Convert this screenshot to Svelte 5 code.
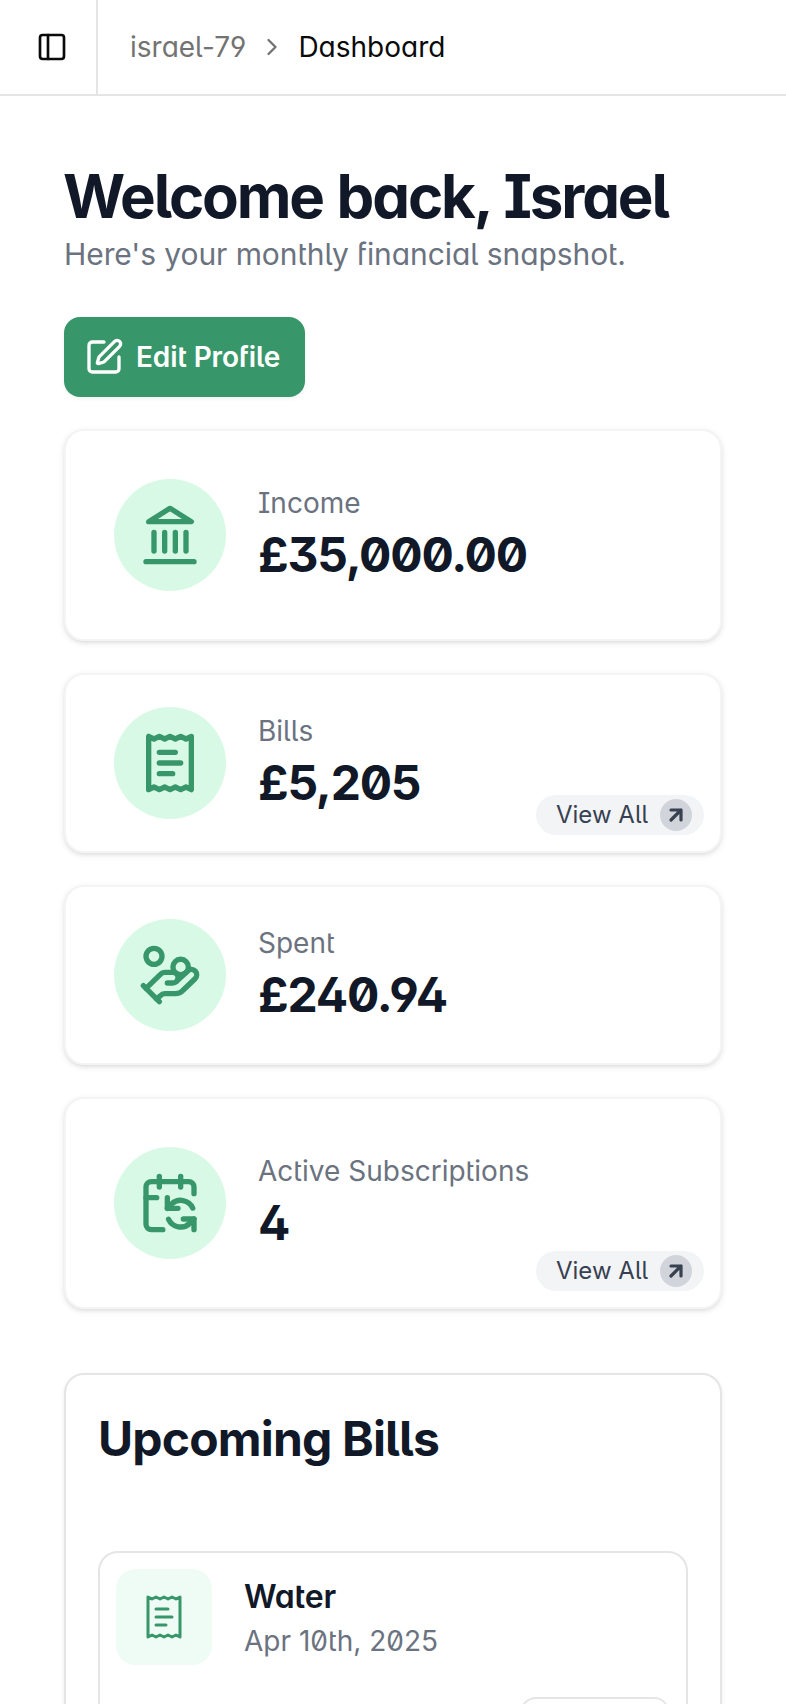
<script>
  const hand = [
    'M11 15h2a2 2 0 1 0 0-4h-3c-.6 0-1.1.2-1.4.6L3 17',
    'm7 21 1.6-1.4c.3-.4.8-.6 1.4-.6h4c1.1 0 2.1-.4 2.8-1.2l4.6-4.4a2 2 0 0 0-2.75-2.91l-4.2 3.9',
    'm2 16 6 6',
  ];
  const calendar = [
    'M11 10v4h4', 'm11 14 1.535-1.605a5 5 0 0 1 8 1.5', 'M16 2v4',
    'm21 18-1.535 1.605a5 5 0 0 1-8-1.5', 'M21 22v-4h-4', 'M21 8.5V6a2 2 0 0 0-2-2H5a2 2 0 0 0-2 2v14a2 2 0 0 0 2 2h4.3',
    'M3 10h4', 'M8 2v4',
  ];
  const cards = [
    { label: 'Income', value: '£35,000.00', icon: 'bank', tall: true },
    { label: 'Bills', value: '£5,205', icon: 'receipt', link: true },
    { label: 'Spent', value: '£240.94', icon: 'hand' },
    { label: 'Active Subscriptions', value: '4', icon: 'calendar', tall: true, link: true },
  ];
</script>

{#snippet receiptIcon()}
  <path d="M4 2v20l2-1 2 1 2-1 2 1 2-1 2 1 2-1 2 1V2l-2 1-2-1-2 1-2-1-2 1-2-1-2 1Z" />
  <path d="M8 8h6M8 12h8M8 16h5" />
{/snippet}

<header>
  <div class="toggle">
    <svg viewBox="0 0 24 24"><rect x="3" y="3" width="18" height="18" rx="2" /><path d="M9 3v18" /></svg>
  </div>
  <nav>
    <span class="crumb">israel-79</span>
    <svg viewBox="0 0 24 24"><path d="m9 18 6-6-6-6" /></svg>
    <span class="current">Dashboard</span>
  </nav>
</header>

<main>
  <h1>Welcome back, Israel</h1>
  <p class="intro">Here's your monthly financial snapshot.</p>
  <button class="edit">
    <svg viewBox="0 0 24 24">
      <path d="M12 3H5a2 2 0 0 0-2 2v14a2 2 0 0 0 2 2h14a2 2 0 0 0 2-2v-7" />
      <path d="M18.375 2.625a1 1 0 0 1 3 3l-9.013 9.014a2 2 0 0 1-.853.505l-2.873.84a.5.5 0 0 1-.62-.62l.84-2.873a2 2 0 0 1 .506-.852z" />
    </svg>
    <span>Edit Profile</span>
  </button>

  <section class="stats">
    {#each cards as card}
      <article class="stat" class:tall={card.tall}>
        <div class="bubble">
          <svg viewBox="0 0 24 24">
            {#if card.icon === 'bank'}
              <path d="M12 2 20 7H4zM6 11v7M10 11v7M14 11v7M18 11v7M3 22h18" />
            {:else if card.icon === 'receipt'}
              {@render receiptIcon()}
            {:else if card.icon === 'hand'}
              {#each hand as d}<path {d} />{/each}
              <circle cx="16" cy="9" r="2.9" /><circle cx="6" cy="5" r="3" />
            {:else}
              {#each calendar as d}<path {d} />{/each}
            {/if}
          </svg>
        </div>
        <div class="figures">
          <span class="label">{card.label}</span>
          <strong>{card.value}</strong>
        </div>
        {#if card.link}
          <a class="view" href="#all">
            <span>View All</span>
            <i><svg viewBox="0 0 24 24"><path d="M7 7h10v10M7 17 17 7" /></svg></i>
          </a>
        {/if}
      </article>
    {/each}
  </section>

  <section class="upcoming">
    <h2>Upcoming Bills</h2>
    <article class="bill">
      <div class="row">
        <div class="tile"><svg viewBox="0 0 24 24">{@render receiptIcon()}</svg></div>
        <div class="info">
          <b>Water</b>
          <span>Apr 10th, 2025</span>
        </div>
      </div>
      <div class="action"></div>
    </article>
  </section>
</main>

<style>
  :global(body) { margin: 0; background: #fff; }
  :global(#app) {
    height: 1704px;
    overflow: hidden;
    font-family: Inter, sans-serif;
    font-feature-settings: 'cv02', 'cv03', 'cv04', 'cv05', 'cv08', 'cv09', 'cv11', 'cv12', 'cv13', 'zero', 'ss02';
    color: #111827;
  }
  svg {
    display: block;
    flex: none;
    fill: none;
    stroke: currentColor;
    stroke-width: 2;
    stroke-linecap: round;
    stroke-linejoin: round;
  }
  header { display: flex; height: 94px; border-bottom: 2px solid #e5e5e5; }
  .toggle {
    box-sizing: border-box;
    width: 98px;
    padding: 31px 0 0 36px;
    border-right: 2px solid #e5e5e5;
    color: #0a0a0a;
  }
  .toggle svg { width: 32px; height: 32px; }
  nav { display: flex; align-items: center; padding-left: 32px; font-size: 28px; }
  nav svg { width: 28px; height: 28px; margin: 0 12px; color: #737373; }
  .crumb { color: #737373; }
  .current { color: #0a0a0a; }
  main { padding: 68px 64px 0; }
  h1 { margin: 0 0 0 -1px; font-size: 60px; line-height: 64px; font-weight: 700; letter-spacing: -2.15px; word-spacing: 1.6px; white-space: nowrap; }
  .intro { margin: 2px 0 0; font-size: 30px; line-height: 48px; letter-spacing: -0.08px; color: #6b7280; white-space: nowrap; }
  .edit {
    display: flex;
    align-items: center;
    gap: 12px;
    width: 241px;
    height: 80px;
    margin: 39px 0 0;
    padding: 0 0 0 20px;
    border: 0;
    border-radius: 16px;
    background: #38976a;
    color: #fff;
    font: 600 28px Inter, sans-serif;
    font-feature-settings: inherit;
    letter-spacing: -0.1px;
    white-space: nowrap;
    box-shadow: 0 2px 4px rgb(0 0 0 / 5%);
  }
  .edit svg { width: 40px; height: 40px; }
  .stats { display: flex; flex-direction: column; gap: 32px; margin-top: 32px; }
  .stat {
    position: relative;
    box-sizing: border-box;
    display: flex;
    align-items: center;
    gap: 32px;
    height: 180px;
    padding: 0 48px;
    border: 2px solid #f3f4f6;
    border-radius: 20px;
    background: #fff;
    box-shadow: 0 2px 6px rgb(0 0 0 / 10%), 0 2px 4px -2px rgb(0 0 0 / 10%);
  }
  .tall { height: 212px; }
  .bubble { display: grid; place-items: center; width: 112px; height: 112px; border-radius: 50%; background: #d8f9e6; color: #38976a; }
  .bubble svg { width: 64px; height: 64px; }
  .figures { display: flex; flex-direction: column; }
  .label { font-size: 28px; line-height: 40px; color: #6b7280; }
  strong { font-size: 48px; line-height: 64px; font-weight: 700; letter-spacing: -1.2px; }
  .view {
    position: absolute;
    right: 16px;
    bottom: 16px;
    box-sizing: border-box;
    display: flex;
    align-items: center;
    justify-content: space-between;
    width: 168px;
    height: 40px;
    padding: 0 12px 0 20px;
    border-radius: 20px;
    background: #f3f4f6;
    color: #374151;
    font-size: 24px;
    text-decoration: none;
  }
  .view span { padding-bottom: 2px; }
  .view i { display: grid; place-items: center; width: 32px; height: 32px; border-radius: 50%; background: #d1d5db; }
  .view svg { width: 24px; height: 24px; stroke-width: 3.2; }
  .upcoming {
    height: 420px;
    margin-top: 64px;
    padding: 32px;
    border: 2px solid #e5e5e5;
    border-radius: 20px;
    box-shadow: 0 2px 4px rgb(0 0 0 / 8%);
  }
  h2 { margin: 0; font-size: 48px; line-height: 64px; font-weight: 700; letter-spacing: -0.83px; }
  .bill { height: 300px; margin-top: 80px; padding: 16px; border: 2px solid #e5e5e5; border-radius: 20px; }
  .row { display: flex; gap: 32px; align-items: center; }
  .tile { display: grid; place-items: center; width: 96px; height: 96px; border-radius: 20px; background: #effcf5; color: #38976a; }
  .tile svg { width: 48px; height: 48px; stroke-width: 1.5; }
  .info { display: flex; flex-direction: column; }
  .info b { font-size: 32px; line-height: 48px; font-weight: 600; letter-spacing: -0.2px; }
  .info span { font-size: 28px; line-height: 40px; color: #6b7280; }
  .action { width: 146px; height: 64px; margin: 32px 0 0 auto; border: 2px solid #e5e5e5; border-radius: 16px; }
</style>
